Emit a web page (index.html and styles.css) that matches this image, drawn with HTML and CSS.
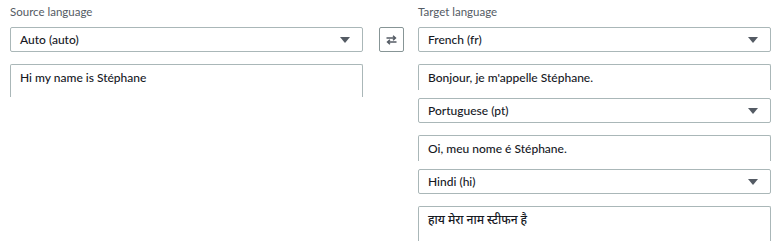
FILE: index.html
```html
<!DOCTYPE html>
<html lang="en">
<head>
    <meta charset="UTF-8">
    <meta name="viewport" content="width=device-width, initial-scale=1.0">
    <title>Translate</title>
    <link rel="stylesheet" href="styles.css">
</head>
<body>
    <div class="translator">
        <!-- source -->
        <div class="col">
            <div class="label">Source language</div>
            <div class="select">Auto (auto)<span class="caret"></span></div>
            <div class="textbox textbox-source">Hi my name is Stéphane</div>
        </div>

        <div class="swap-col">
            <button class="swap" title="Swap languages">
                <svg width="11" height="10" viewBox="0 0 11 10" fill="none" stroke="#545b64" stroke-width="1.4">
                    <path d="M0.5 3H9.5M7 0.8L9.5 3L7 5.2"/>
                    <path d="M10.5 7H1.5M4 4.8L1.5 7L4 9.2"/>
                </svg>
            </button>
        </div>

        <!-- targets -->
        <div class="col">
            <div class="label">Target language</div>
            <div class="select">French (fr)<span class="caret"></span></div>
            <div class="textbox">Bonjour, je m'appelle Stéphane.</div>
            <div class="select">Portuguese (pt)<span class="caret"></span></div>
            <div class="textbox">Oi, meu nome é Stéphane.</div>
            <div class="select">Hindi (hi)<span class="caret"></span></div>
            <div class="textbox textbox-last" lang="hi">हाय मेरा नाम स्टीफन है</div>
        </div>
    </div>
</body>
</html>
```

FILE: styles.css
```css
* {
    margin: 0;
    padding: 0;
    box-sizing: border-box;
    font-family: Lato, "Liberation Sans", "Noto Sans", sans-serif;
}

body {
    background: #ffffff;
    color: #16191f;
    font-size: 12px;
}

.translator {
    display: flex;
    padding: 0 10px;
}

.col {
    width: 353px;
    display: flex;
    flex-direction: column;
}

.label {
    height: 27px;
    padding-top: 3px;
    line-height: 17px;
    font-size: 11.5px;
    color: #545b64;
}

.select {
    position: relative;
    height: 25px;
    line-height: 23px;
    padding: 0 9px;
    border: 1px solid #aab7b8;
    border-radius: 2px;
    margin-bottom: 12px;
    font-weight: 500;
}

.caret {
    position: absolute;
    right: 12px;
    top: 9px;
    width: 0;
    height: 0;
    border-left: 5px solid transparent;
    border-right: 5px solid transparent;
    border-top: 6px solid #545b64;
}

.textbox {
    height: 26px;
    padding: 4px 9px 0;
    line-height: 18px;
    border: 1px solid #aab7b8;
    border-bottom: none;
    border-radius: 2px 2px 0 0;
    margin-bottom: 8px;
    font-weight: 500;
}

.textbox-source {
    height: 33px;
}

.textbox-last {
    height: 35px;
}

.swap-col {
    padding: 27px 14px 0 16px;
}

.swap {
    display: flex;
    align-items: center;
    justify-content: center;
    width: 25px;
    height: 25px;
    background: #ffffff;
    border: 1px solid #879596;
    border-radius: 2px;
}
```
